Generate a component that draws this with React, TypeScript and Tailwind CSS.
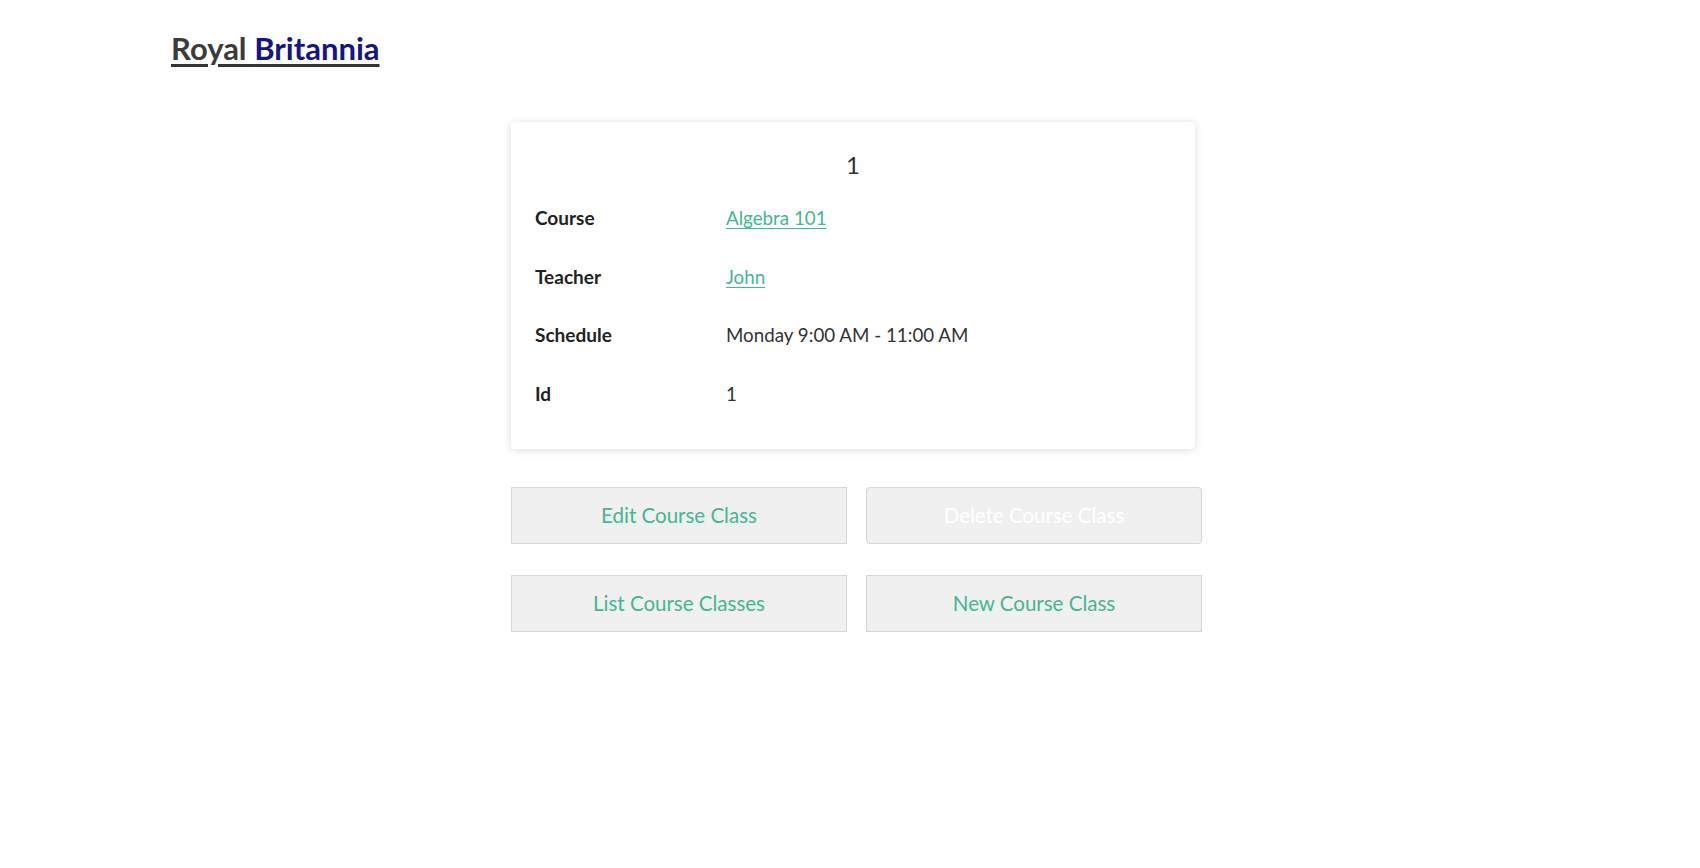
import React from 'react';

const rows = [
  { label: 'Course', value: 'Algebra 101', link: true },
  { label: 'Teacher', value: 'John', link: true },
  { label: 'Schedule', value: 'Monday 9:00 AM - 11:00 AM', link: false },
  { label: 'Id', value: '1', link: false },
];

export default function App() {
  return (
    <div className="min-h-screen bg-white font-['Lato',sans-serif] text-[#333]">
      {/* Header */}
      <header className="pl-[171px] pt-[27px]">
        <a href="#" className="text-[31px] font-bold leading-[42px] underline underline-offset-[4px]">
          <span className="text-[#3b3b3b] decoration-[#3b3b3b]">Royal </span>
          <span className="text-[#14148c]">Britannia</span>
        </a>
      </header>

      <main className="ml-[511px] mt-[53px] w-[691px]">
        {/* Detail card */}
        <section className="w-[684px] rounded-[4px] bg-white px-6 pt-[25px] pb-[26px] shadow-[0_1px_8px_rgba(0,0,0,0.14)]">
          <h2 className="text-center text-[24px] leading-[36px] text-[#333]">1</h2>
          <div className="mt-[6px]">
            {rows.map((r) => (
              <div key={r.label} className="flex h-[58.5px] items-center">
                <span className="w-[191px] text-[19px] font-bold text-[#222]">{r.label}</span>
                {r.link ? (
                  <a href="#" className="text-[18.75px] text-[#3fb893] underline underline-offset-[3px]">
                    {r.value}
                  </a>
                ) : (
                  <span className="text-[18.75px] text-[#333]">{r.value}</span>
                )}
              </div>
            ))}
          </div>
        </section>

        {/* Actions */}
        <div className="mt-[38px] grid grid-cols-2 gap-x-[19px] gap-y-[31px]">
          <button className="h-[57px] border border-[#d6d6d6] bg-[#f0f0f0] text-[20.5px] text-[#3fb893]">
            Edit Course Class
          </button>
          <button className="h-[57px] rounded-[4px] border border-[#d6d6d6] bg-[#f0f0f0] text-[20.5px] text-white">
            Delete Course Class
          </button>
          <button className="h-[57px] border border-[#d6d6d6] bg-[#f0f0f0] text-[20.5px] text-[#3fb893]">
            List Course Classes
          </button>
          <button className="h-[57px] border border-[#d6d6d6] bg-[#f0f0f0] text-[20.5px] text-[#3fb893]">
            New Course Class
          </button>
        </div>
      </main>
    </div>
  );
}
